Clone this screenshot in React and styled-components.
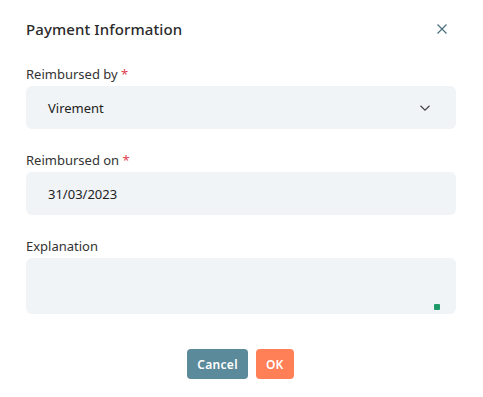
import styled, { createGlobalStyle } from "styled-components";

const GlobalStyle = createGlobalStyle`
  html, body {
    margin: 0;
    padding: 0;
    background: #fff;
    font-family: "Noto Sans", "Open Sans", sans-serif;
  }
`;

function App() {
  return (
    <>
      <GlobalStyle />
      <Dialog>
        <Header>
          <Title>Payment Information</Title>
          <CloseButton aria-label="Close">
            <svg width="12" height="12" viewBox="0 0 12 12">
              <path d="M1.5 1.5l9 9M10.5 1.5l-9 9" stroke="#4a6f80" strokeWidth="1.2" fill="none" />
            </svg>
          </CloseButton>
        </Header>

        <Field>
          <Label>
            Reimbursed by <Star>*</Star>
          </Label>
          <Box>
            <Value>Virement</Value>
            <svg width="12" height="8" viewBox="0 0 12 8">
              <path d="M1.5 1.8l4.5 4.4 4.5-4.4" stroke="#444" strokeWidth="1.2" fill="none" />
            </svg>
          </Box>
        </Field>

        <Field>
          <Label>
            Reimbursed on <Star>*</Star>
          </Label>
          <Box>
            <Value>31/03/2023</Value>
          </Box>
        </Field>

        <Field>
          <Label>Explanation</Label>
          <TextArea>
            <Grip />
          </TextArea>
        </Field>

        <Actions>
          <Button $bg="#5b8a9b">Cancel</Button>
          <Button $bg="#ff7f57">OK</Button>
        </Actions>
      </Dialog>
    </>
  );
}

export default App;

const Dialog = styled.div`
  width: 483px;
  height: 397px;
  box-sizing: border-box;
  padding: 17px 27px 0 26px;
  background: #fff;
`;

const Header = styled.div`
  display: flex;
  align-items: center;
  justify-content: space-between;
  height: 24px;
  margin-bottom: 24px;
`;

const Title = styled.h2`
  margin: 0;
  font-size: 15px;
  font-weight: 500;
  color: #2a2a2a;
  letter-spacing: 0.1px;
`;

const CloseButton = styled.button`
  border: 0;
  background: none;
  padding: 0;
  margin-right: 8px;
  display: flex;
  cursor: pointer;
`;

const Field = styled.div`
  display: flex;
  flex-direction: column;
  gap: 3px;
  margin-bottom: 22px;
`;

const Label = styled.label`
  font-size: 13px;
  line-height: 18px;
  color: #333;
`;

const Star = styled.span`
  color: #e0424f;
`;

const Box = styled.div`
  height: 43px;
  box-sizing: border-box;
  background: #f1f4f7;
  border-radius: 6px;
  display: flex;
  align-items: center;
  justify-content: space-between;
  padding: 0 25px 0 22px;
`;

const Value = styled.span`
  font-size: 13px;
  color: #222;
`;

const TextArea = styled.div`
  height: 56px;
  background: #f1f4f7;
  border-radius: 6px;
  display: flex;
  align-items: flex-end;
  justify-content: flex-end;
  padding: 0 16px 4px 0;
  box-sizing: border-box;
`;

const Grip = styled.div`
  width: 6px;
  height: 6px;
  background: #1f9a6a;
  border-radius: 1px;
`;

const Actions = styled.div`
  display: flex;
  justify-content: center;
  gap: 8px;
  margin-top: 35px;
  padding-right: 1px;
`;

const Button = styled.button`
  height: 30px;
  padding: 0 10px;
  border: 0;
  border-radius: 4px;
  background: ${(p) => p.$bg};
  color: #fff;
  font-family: inherit;
  font-size: 12px;
  font-weight: 600;
  letter-spacing: 0.3px;
  cursor: pointer;
`;
